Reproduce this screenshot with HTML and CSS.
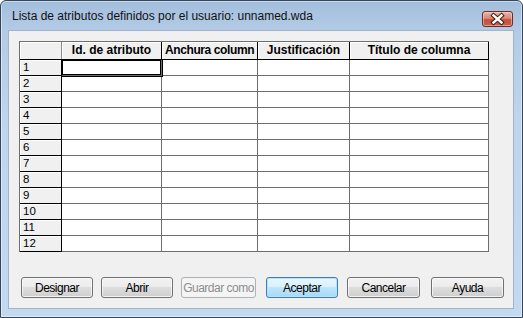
FILE: index.html
```html
<!DOCTYPE html>
<html lang="es">
<head>
<meta charset="utf-8">
<title>Lista de atributos definidos por el usuario</title>
<link rel="stylesheet" href="styles.css">
</head>
<body>
<div class="window">
  <div class="titlebar">
    <span class="title">Lista de atributos definidos por el usuario: unnamed.wda</span>
    <button class="close" aria-label="Cerrar">
      <svg width="29" height="14" viewBox="0 0 29 14">
        <path d="M10.5 3.5 L18.5 10.5 M18.5 3.5 L10.5 10.5" stroke="#4a1810" stroke-width="4.4" stroke-linecap="square" fill="none"/>
        <path d="M10.5 3.5 L18.5 10.5 M18.5 3.5 L10.5 10.5" stroke="#ffffff" stroke-width="2.4" stroke-linecap="square" fill="none"/>
      </svg>
    </button>
  </div>
  <div class="client">
    <div class="grid">
      <div class="corner"></div>
      <div class="colhead">Id. de atributo</div>
      <div class="colhead tight">Anchura column</div>
      <div class="colhead">Justificación</div>
      <div class="colhead">Título de columna</div>

      <div class="rowhead">1</div><div class="cell focus"></div><div class="cell"></div><div class="cell"></div><div class="cell"></div>
      <div class="rowhead">2</div><div class="cell"></div><div class="cell"></div><div class="cell"></div><div class="cell"></div>
      <div class="rowhead">3</div><div class="cell"></div><div class="cell"></div><div class="cell"></div><div class="cell"></div>
      <div class="rowhead">4</div><div class="cell"></div><div class="cell"></div><div class="cell"></div><div class="cell"></div>
      <div class="rowhead">5</div><div class="cell"></div><div class="cell"></div><div class="cell"></div><div class="cell"></div>
      <div class="rowhead">6</div><div class="cell"></div><div class="cell"></div><div class="cell"></div><div class="cell"></div>
      <div class="rowhead">7</div><div class="cell"></div><div class="cell"></div><div class="cell"></div><div class="cell"></div>
      <div class="rowhead">8</div><div class="cell"></div><div class="cell"></div><div class="cell"></div><div class="cell"></div>
      <div class="rowhead">9</div><div class="cell"></div><div class="cell"></div><div class="cell"></div><div class="cell"></div>
      <div class="rowhead">10</div><div class="cell"></div><div class="cell"></div><div class="cell"></div><div class="cell"></div>
      <div class="rowhead">11</div><div class="cell"></div><div class="cell"></div><div class="cell"></div><div class="cell"></div>
      <div class="rowhead">12</div><div class="cell"></div><div class="cell"></div><div class="cell"></div><div class="cell"></div>
    </div>
    <div class="buttons">
      <button class="btn">Designar</button>
      <button class="btn">Abrir</button>
      <button class="btn wide" disabled>Guardar como</button>
      <button class="btn default gap10">Aceptar</button>
      <button class="btn w73 gap9">Cancelar</button>
      <button class="btn w73 gap11">Ayuda</button>
    </div>
  </div>
</div>
</body>
</html>
```

FILE: styles.css
```css
* { box-sizing: border-box; }

html, body {
  margin: 0;
  padding: 0;
  background: #ffffff;
}

.window {
  width: 523px;
  height: 318px;
  border: 1px solid #36465a;
  border-radius: 6px 6px 0 0;
  background: linear-gradient(to bottom, #a2bedc 0px, #b3cbe6 30px, #bfd5ed 120px, #c3d9f0 100%);
  box-shadow: inset 0 0 0 1px rgba(255, 255, 255, 0.45);
  padding: 0 8px 8px 7px;
  display: flex;
  flex-direction: column;
  font-family: "Liberation Sans", Arial, sans-serif;
}

.titlebar {
  height: 29px;
  display: flex;
  align-items: flex-start;
  justify-content: space-between;
}

.title {
  font-family: "Liberation Sans", Arial, sans-serif;
  font-size: 12px;
  color: #111;
  padding: 8px 0 0 4px;
  line-height: 15px;
}

.close {
  margin: 10px 1px 0 0;
  width: 31px;
  height: 16px;
  padding: 0;
  border: 1px solid #6b2d24;
  border-radius: 3px;
  background: linear-gradient(to bottom, #eab3a6 0%, #d98877 45%, #c5503d 55%, #c9604a 100%);
  box-shadow: inset 0 0 0 1px rgba(255, 230, 220, 0.45);
  display: flex;
  align-items: center;
  justify-content: center;
}

.client {
  flex: 1;
  background: #f0f0f0;
  border: 1px solid #9fb4cc;
  padding: 10px 0 0 10px;
  display: flex;
  flex-direction: column;
}

.grid {
  display: grid;
  grid-template-columns: 42px 100px 96px 92px 139px;
  grid-template-rows: 18px repeat(12, 16px);
  width: 470px;
  border-top: 1px solid #6e6e6e;
  border-left: 1px solid #6e6e6e;
  font-family: "Liberation Sans", Arial, sans-serif;
}

.corner,
.colhead,
.rowhead {
  background: #f0f0f0;
  border-right: 1px solid #000;
  border-bottom: 1px solid #000;
  box-shadow: inset 1px 1px 0 #ffffff;
}

.corner {
  border-right-color: #8a8a8a;
}

.colhead {
  font-weight: bold;
  font-size: 12px;
  line-height: 17px;
  text-align: center;
  white-space: nowrap;
  overflow: hidden;
  padding: 0 2px;
  color: #000;
}

.colhead.tight {
  letter-spacing: -0.4px;
  text-align: left;
  padding-left: 3px;
}

.rowhead {
  font-size: 11.5px;
  line-height: 15px;
  padding-left: 3px;
  color: #000;
}

.cell {
  background: #ffffff;
  border-right: 1px solid #6e6e6e;
  border-bottom: 1px solid #6e6e6e;
}

.cell.focus {
  box-shadow: 0 0 0 1px #000, inset 0 0 0 1px #000;
  position: relative;
}

.buttons {
  display: flex;
  margin-top: 25px;
  padding-left: 2px;
}

.btn {
  width: 72px;
  height: 21px;
  margin-right: 8px;
  padding: 0;
  border: 1px solid #707070;
  border-radius: 3px;
  background: linear-gradient(to bottom, #f2f2f2 0%, #ebebeb 50%, #dddddd 50%, #cfcfcf 100%);
  box-shadow: inset 0 0 0 1px rgba(255, 255, 255, 0.7);
  font-family: "Liberation Sans", Arial, sans-serif;
  font-size: 12px;
  letter-spacing: -0.5px;
  white-space: nowrap;
  color: #000;
}

.btn.wide {
  width: 75px;
}

.btn.w73 {
  width: 73px;
}

.btn:disabled {
  border-color: #adb2b5;
  background: #f4f4f4;
  color: #8d8d8d;
  box-shadow: none;
}

.btn.default {
  border-color: #3c7fb1;
  background: linear-gradient(to bottom, #eaf6fd 0%, #d9f0fc 50%, #bee6fd 50%, #a7d9f5 100%);
  box-shadow: inset 0 0 0 1px #b8e2fa;
}

.gap10 { margin-left: 2px; }
.gap9 { margin-left: 1px; }
.gap11 { margin-left: 3px; }
```
